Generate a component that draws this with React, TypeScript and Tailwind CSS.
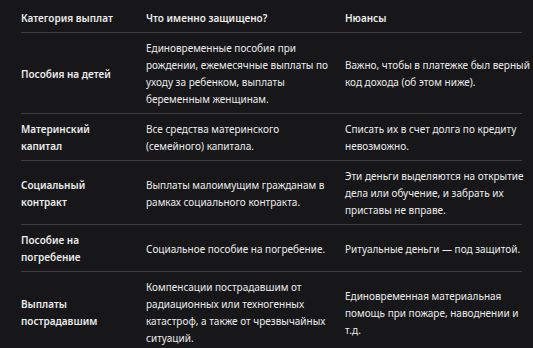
const rows = [
  {
    name: ["Пособия на детей"],
    what: ["Единовременные пособия при", "рождении, ежемесячные выплаты по", "уходу за ребенком, выплаты", "беременным женщинам."],
    note: ["Важно, чтобы в платежке был верный", "код дохода (об этом ниже)."],
  },
  {
    name: ["Материнский", "капитал"],
    what: ["Все средства материнского", "(семейного) капитала."],
    note: ["Списать их в счет долга по кредиту", "невозможно."],
  },
  {
    name: ["Социальный", "контракт"],
    what: ["Выплаты малоимущим гражданам в", "рамках социального контракта."],
    note: ["Эти деньги выделяются на открытие", "дела или обучение, и забрать их", "приставы не вправе."],
  },
  {
    name: ["Пособие на", "погребение"],
    what: ["Социальное пособие на погребение."],
    note: ["Ритуальные деньги — под защитой."],
  },
  {
    name: ["Выплаты", "пострадавшим"],
    what: ["Компенсации пострадавшим от", "радиационных или техногенных", "катастроф, а также от чрезвычайных", "ситуаций."],
    note: ["Единовременная материальная", "помощь при пожаре, наводнении и", "т.д."],
  },
]

function Lines({ lines }: { lines: string[] }) {
  return (
    <>
      {lines.map((l, i) => (
        <div key={i} className="whitespace-nowrap">
          {l}
        </div>
      ))}
    </>
  )
}

export default function App() {
  return (
    <div
      className="w-[533px] h-[348px] overflow-hidden bg-[#171719] text-[#ececec] text-[10px] leading-[17px] pt-[3px] px-[21px]"
      style={{ fontFamily: '"Noto Sans", "Open Sans", sans-serif' }}
    >
      <div className="w-[501px]">
        <div className="grid grid-cols-[125px_199px_1fr] border-b border-[#3d3d3f] pt-[7px] pb-[5px] font-semibold">
          <div>Категория выплат</div>
          <div>Что именно защищено?</div>
          <div>Нюансы</div>
        </div>
        {rows.map((r, i) => (
          <div
            key={i}
            className="grid grid-cols-[125px_199px_1fr] items-center border-b border-[#3d3d3f] pt-[7px] pb-[5px]"
          >
            <div className="font-semibold">
              <Lines lines={r.name} />
            </div>
            <div>
              <Lines lines={r.what} />
            </div>
            <div>
              <Lines lines={r.note} />
            </div>
          </div>
        ))}
      </div>
    </div>
  )
}
